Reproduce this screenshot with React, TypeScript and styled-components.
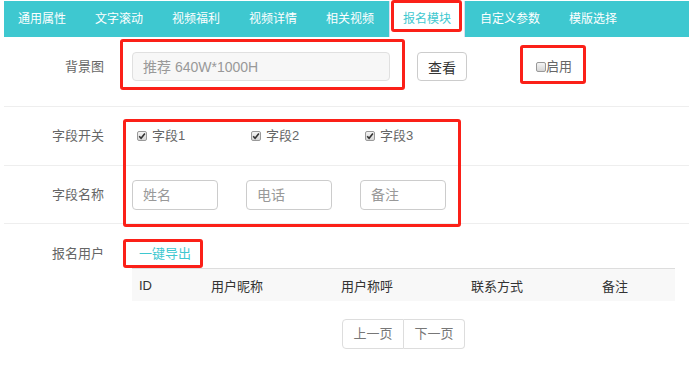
import React from "react";
import styled, { createGlobalStyle, css } from "styled-components";

const TEAL = "#3ec8d0";
const MARK = "#fb2018";

const GlobalStyle = createGlobalStyle`
  body {
    margin: 0;
    background: #fff;
    font-family: "Liberation Sans", "Noto Sans CJK SC", sans-serif;
  }
`;

const tabs = ["通用属性", "文字滚动", "视频福利", "视频详情", "相关视频", "报名模块", "自定义参数", "模版选择"];
const ACTIVE = "报名模块";
const fields = [
  { label: "字段1", name: "姓名" },
  { label: "字段2", name: "电话" },
  { label: "字段3", name: "备注" },
];
const columns = [
  { title: "ID", width: 72 },
  { title: "用户昵称", width: 130 },
  { title: "用户称呼", width: 130 },
  { title: "联系方式", width: 131 },
  { title: "备注", width: 80 },
];

const Check: React.FC<{ checked?: boolean }> = ({ checked }) => (
  <Box>
    {checked && (
      <svg width="8" height="8" viewBox="0 0 8 8">
        <path d="M1.2 4.2 L3.1 6.2 L6.9 1.6" fill="none" stroke="#333" strokeWidth="1.6" />
      </svg>
    )}
  </Box>
);

export default function App() {
  return (
    <Page>
      <GlobalStyle />
      <TabBar>
        {tabs.map((t) => (
          <Tab key={t} $active={t === ACTIVE}>
            {t}
            {t === ACTIVE && <Mark $inset="-1px 2px 5px 1px" />}
          </Tab>
        ))}
      </TabBar>

      <Row $pad="15px 0 25px">
        <Label>背景图</Label>
        <Marked>
          <TextInput $width={258} $height={29} $muted placeholder="推荐 640W*1000H" readOnly />
          <Mark $inset="-13px -15px -9px -12px" />
        </Marked>
        <Button>查看</Button>
        <CheckLabel $gap={0} style={{ marginLeft: 69 }}>
          <Check />
          启用
          <Mark $inset="-12px -14px -7px -16px" />
        </CheckLabel>
      </Row>

      <Group>
        <Row $height={58}>
          <Label>字段开关</Label>
          <Fields>
            {fields.map((f) => (
              <CheckLabel key={f.label} $gap={5} $indent={5}>
                <Check checked />
                {f.label}
              </CheckLabel>
            ))}
          </Fields>
        </Row>
        <Row $height={57}>
          <Label>字段名称</Label>
          <Fields>
            {fields.map((f) => (
              <TextInput key={f.name} $width={86} $height={30} placeholder={f.name} readOnly />
            ))}
          </Fields>
        </Row>
        <Mark $inset="12px 228px -3px 119px" />
      </Group>

      <UsersRow>
        <Label>报名用户</Label>
        <UsersBody>
          <Marked>
            <ExportLink>一键导出</ExportLink>
            <Mark $inset="-5px -5px -4px -9px" />
          </Marked>
          <Table>
            <HeadRow>
              {columns.map((c) => (
                <HeadCell key={c.title} $width={c.width}>
                  {c.title}
                </HeadCell>
              ))}
            </HeadRow>
          </Table>
          <Pager>
            <PageButton>上一页</PageButton>
            <PageButton>下一页</PageButton>
          </Pager>
        </UsersBody>
      </UsersRow>
    </Page>
  );
}

const Page = styled.div`
  padding: 1px 7px 0 4px;
`;

const TabBar = styled.nav`
  display: flex;
  height: 36px;
  background: ${TEAL};
`;

const Tab = styled.div<{ $active?: boolean }>`
  position: relative;
  padding: 0 14px;
  margin-right: 1px;
  font-size: 12px;
  line-height: 36px;
  color: #fff;
  white-space: nowrap;
  ${(p) =>
    p.$active &&
    css`
      padding: 0 13px;
      background: #fff;
      color: ${TEAL};
      border-left: 1px solid #dde;
      border-right: 1px solid #dde;
    `}
`;

const Mark = styled.span<{ $inset: string }>`
  position: absolute;
  inset: ${(p) => p.$inset};
  border: 3px solid ${MARK};
  border-radius: 3px;
  pointer-events: none;
`;

const Marked = styled.div`
  position: relative;
  display: inline-flex;
  align-self: flex-start;
`;

const Row = styled.div<{ $pad?: string; $height?: number }>`
  display: flex;
  align-items: center;
  border-bottom: 1px solid #eee;
  padding: ${(p) => p.$pad ?? "0"};
  ${(p) => p.$height && `height: ${p.$height}px;`}
`;

const Label = styled.div`
  width: 100px;
  flex-shrink: 0;
  margin-right: 28px;
  text-align: right;
  font-size: 13px;
  line-height: 20px;
  color: #666;
`;

const TextInput = styled.input<{ $width: number; $height: number; $muted?: boolean }>`
  box-sizing: border-box;
  width: ${(p) => p.$width}px;
  height: ${(p) => p.$height}px;
  padding: 0 10px;
  border: 1px solid ${(p) => (p.$muted ? "#e0e0e0" : "#ccc")};
  border-radius: 4px;
  background: ${(p) => (p.$muted ? "#f7f7f7" : "#fff")};
  font-family: inherit;
  font-size: 14px;
  outline: none;
  &::placeholder {
    color: #999;
  }
`;

const Button = styled.button`
  box-sizing: border-box;
  width: 50px;
  height: 29px;
  margin-left: 27px;
  padding: 0;
  border: 1px solid #ccc;
  border-radius: 4px;
  background: #fff;
  font-family: inherit;
  font-size: 14px;
  color: #333;
`;

const CheckLabel = styled.label<{ $gap: number; $indent?: number }>`
  position: relative;
  display: inline-flex;
  align-items: center;
  gap: ${(p) => p.$gap}px;
  padding-left: ${(p) => p.$indent ?? 0}px;
  font-size: 13px;
  line-height: 20px;
  color: #666;
`;

const Box = styled.span`
  box-sizing: border-box;
  width: 10px;
  height: 10px;
  display: inline-flex;
  align-items: center;
  justify-content: center;
  border: 1px solid #999;
  border-radius: 2px;
  background: linear-gradient(#f4f4f4, #d6d6d6);
`;

const Group = styled.div`
  position: relative;
`;

const Fields = styled.div`
  display: grid;
  grid-template-columns: repeat(3, 86px);
  column-gap: 28px;
  align-items: center;
`;

const UsersRow = styled.div`
  display: flex;
  align-items: flex-start;
  padding-top: 20px;
`;

const UsersBody = styled.div`
  display: flex;
  flex-direction: column;
  width: 543px;
`;

const ExportLink = styled.a`
  padding: 0 7px;
  font-size: 13px;
  line-height: 20px;
  color: ${TEAL};
`;

const Table = styled.div`
  margin-top: 4px;
`;

const HeadRow = styled.div`
  display: flex;
  height: 32px;
  align-items: center;
  border-top: 1px solid #ddd;
  background: #f8f8f8;
`;

const HeadCell = styled.div<{ $width: number }>`
  box-sizing: border-box;
  width: ${(p) => p.$width}px;
  padding-left: 7px;
  font-size: 13px;
  color: #333;
`;

const Pager = styled.div`
  display: flex;
  justify-content: center;
  margin-top: 18px;
`;

const PageButton = styled.div`
  box-sizing: border-box;
  width: 62px;
  height: 30px;
  line-height: 28px;
  text-align: center;
  border: 1px solid #ddd;
  font-size: 13px;
  color: #777;
  &:first-child {
    border-radius: 4px 0 0 4px;
  }
  &:last-child {
    width: 61px;
    border-left: none;
    border-radius: 0 4px 4px 0;
  }
`;
